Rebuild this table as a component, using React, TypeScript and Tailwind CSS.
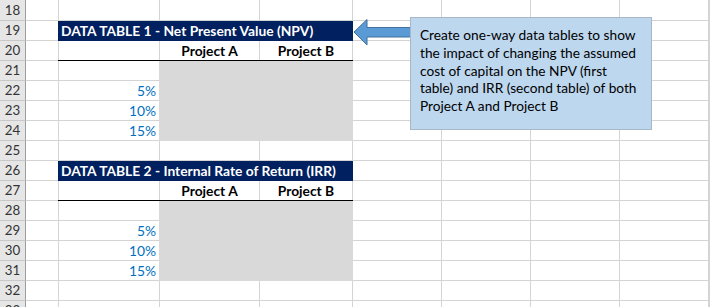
import type { ReactNode } from 'react'

const FIRST_ROW = 18
const ROW_COUNT = 16
const COL_COUNT = 9

// content for plain cells, keyed by "row-col" (col 1 = B)
const CELLS: Record<string, { text: string; kind: 'pct' | 'head' }> = {
  '20-3': { text: 'Project A', kind: 'head' },
  '20-4': { text: 'Project B', kind: 'head' },
  '22-2': { text: '5%', kind: 'pct' },
  '23-2': { text: '10%', kind: 'pct' },
  '24-2': { text: '15%', kind: 'pct' },
  '27-3': { text: 'Project A', kind: 'head' },
  '27-4': { text: 'Project B', kind: 'head' },
  '29-2': { text: '5%', kind: 'pct' },
  '30-2': { text: '10%', kind: 'pct' },
  '31-2': { text: '15%', kind: 'pct' },
}

function Cell({ row, col }: { row: number; col: number }) {
  const c = CELLS[`${row}-${col}`]
  let inner: ReactNode = null
  if (c?.kind === 'pct') inner = <span className="ml-auto pr-[3px] text-[#0070c0]">{c.text}</span>
  if (c?.kind === 'head') inner = <span className="mx-auto font-bold text-black">{c.text}</span>
  return (
    <div
      className="flex items-center border-b border-r border-[#d4d4d4] overflow-hidden whitespace-nowrap"
      style={{ gridRow: row - FIRST_ROW + 1, gridColumn: col + 1 }}
    >
      {inner}
    </div>
  )
}

function DataTable({ first, title }: { first: boolean; title: string }) {
  const band = first ? 'row-start-2' : 'row-start-9'
  const head = first ? 'row-start-3' : 'row-start-10'
  const gray = first ? 'row-start-4 row-end-8' : 'row-start-11 row-end-15'
  return (
    <>
      <div className={`${band} col-start-3 col-end-6 -ml-px flex items-center bg-[#002060] pl-[3px] text-white font-bold whitespace-nowrap`}>
        {title}
      </div>
      <div className={`${head} col-start-3 col-end-6 -ml-px border-b border-black pointer-events-none`} />
      <div className={`${gray} col-start-4 col-end-6 -ml-px bg-[#d9d9d9]`} />
    </>
  )
}

export default function App() {
  const rows = Array.from({ length: ROW_COUNT }, (_, i) => FIRST_ROW + i)
  return (
    <div
      className="relative h-[307px] w-[710px] overflow-hidden bg-white text-[13.8px] leading-none"
      style={{ fontFamily: 'Lato, "Liberation Sans", sans-serif' }}
    >
      <div className="grid grid-cols-[26px_33px_101px_100px_93px_89px_89px_89px_89px_1fr] grid-rows-[21px_repeat(15,20px)]">
        {rows.map(r => (
          <div key={r} className="contents">
            <div
              className="flex items-center justify-center border-b border-r border-b-[#c8c8c8] border-r-[#9e9e9e] bg-[#e6e6e6] pt-px text-[13.3px] text-[#333]"
              style={{ gridRow: r - FIRST_ROW + 1, gridColumn: 1 }}
            >
              {r}
            </div>
            {Array.from({ length: COL_COUNT }, (_, c) => (
              <Cell key={c} row={r} col={c + 1} />
            ))}
          </div>
        ))}
        <DataTable first title="DATA TABLE 1 - Net Present Value (NPV)" />
        <DataTable first={false} title="DATA TABLE 2 - Internal Rate of Return (IRR)" />
      </div>

      {/* arrow pointing at table 1 */}
      <svg className="absolute left-[352px] top-[17px]" width="60" height="30" viewBox="0 0 60 30">
        <polygon
          points="2,15 15,2.5 15,10.5 59,10.5 59,20 15,20 15,28 2,15"
          fill="#5b9bd5"
          stroke="#41719c"
          strokeWidth="1"
        />
      </svg>

      {/* callout */}
      <div className="absolute left-[410px] top-[17px] h-[113px] w-[242px] border border-[#a9b8c8] bg-[#bdd7ee] pl-[9px] pt-[8px] text-[13.7px] leading-[17.8px] text-black whitespace-nowrap">
        Create one-way data tables to show
        <br />
        the impact of changing the assumed
        <br />
        cost of capital on the NPV (first
        <br />
        table) and IRR (second table) of both
        <br />
        Project A and Project B
      </div>
    </div>
  )
}
